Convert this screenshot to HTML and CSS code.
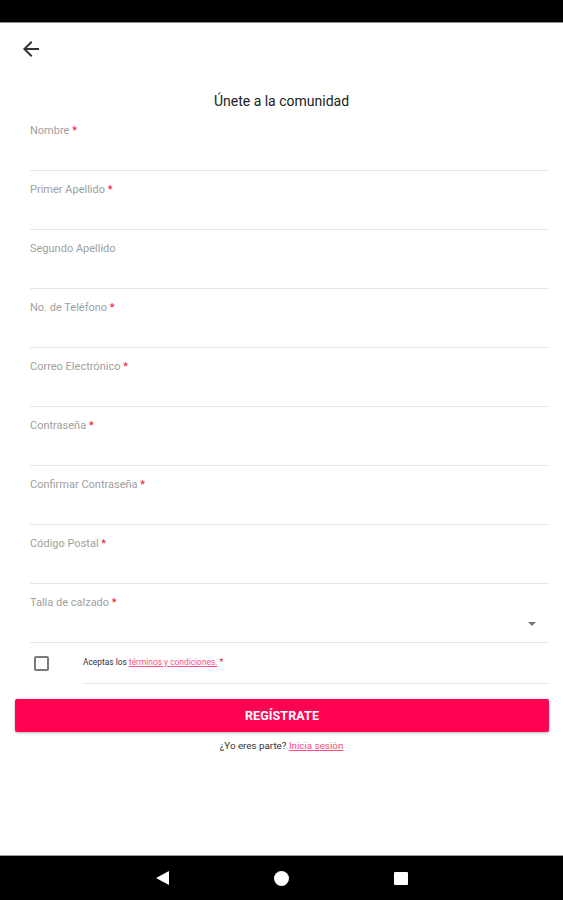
FILE: index.html
```html
<!DOCTYPE html>
<html lang="es">
<head>
<meta charset="utf-8">
<title>Únete a la comunidad</title>
<link rel="stylesheet" href="styles.css">
</head>
<body>
<div class="screen">
  <div class="status-bar"></div>
  <main class="content">
    <div class="header">
      <svg class="back" viewBox="0 0 24 24" width="24" height="24"><path d="M20 11H7.83l5.59-5.59L12 4l-8 8 8 8 1.41-1.41L7.830 13H20v-2z" fill="#333"/></svg>
    </div>
    <h1 class="title">Únete a la comunidad</h1>
    <form class="form">
      <div class="field"><span class="label">Nombre <span class="req">*</span></span></div>
      <div class="field"><span class="label">Primer Apellido <span class="req">*</span></span></div>
      <div class="field"><span class="label">Segundo Apellido</span></div>
      <div class="field"><span class="label">No. de Teléfono <span class="req">*</span></span></div>
      <div class="field"><span class="label">Correo Electrónico <span class="req">*</span></span></div>
      <div class="field"><span class="label">Contraseña <span class="req">*</span></span></div>
      <div class="field"><span class="label">Confirmar Contraseña <span class="req">*</span></span></div>
      <div class="field"><span class="label">Código Postal <span class="req">*</span></span></div>
      <div class="field select"><span class="label">Talla de calzado <span class="req">*</span></span><span class="caret"></span></div>
    </form>
    <div class="terms">
      <span class="checkbox"></span>
      <div class="terms-text"><span>Aceptas los <a class="link">términos y condiciones.</a> <span class="req">*</span></span></div>
    </div>
    <div class="btn-wrap"><button class="btn" type="button">REGÍSTRATE</button></div>
    <p class="login">¿Yo eres parte? <a class="link">Inicia sesión</a></p>
  </main>
  <div class="nav-bar">
    <span class="nav-back"></span>
    <span class="nav-home"></span>
    <span class="nav-recent"></span>
  </div>
</div>
</body>
</html>
```

FILE: styles.css
```css
* { box-sizing: border-box; }
html, body { margin: 0; padding: 0; background: #fff; }
body { font-family: Roboto, "Liberation Sans", Arial, sans-serif; color: #333; }

.screen { width: 563px; height: 900px; display: flex; flex-direction: column; overflow: hidden; }

.status-bar { height: 23px; background: #000; border-bottom: 1px solid #8a8a8a; flex: none; }

.content { flex: 1; display: flex; flex-direction: column; }

.header { height: 38px; padding: 14px 0 0 19px; }
.back { display: block; }

.title { margin: 32px 0 3px; font-size: 14px; font-weight: 400; line-height: 16px; text-align: center; color: #222; }

.form { padding: 0 14px 0 30px; display: flex; flex-direction: column; }
.field { height: 59px; border-bottom: 1px solid #e6e6e6; padding-top: 12px; position: relative; }
.label { display: block; font-size: 11px; line-height: 14px; color: #a0a0a0; }
.req { color: #ee1133; }

.caret { position: absolute; right: 13px; top: 38px; width: 0; height: 0; border-left: 4px solid transparent; border-right: 4px solid transparent; border-top: 4px solid #777; }

.terms { display: flex; align-items: flex-start; padding: 0 14px 0 34px; height: 41px; }
.checkbox { width: 15px; height: 15px; border: 2px solid #7a7a7a; border-radius: 2px; margin-top: 13px; flex: none; }
.terms-text { flex: 1; margin-left: 34px; height: 41px; border-bottom: 1px solid #e6e6e6; padding-top: 14px; font-size: 8.4px; line-height: 10px; color: #333; }

.link { color: #ff4d80; text-decoration: underline; }

.btn-wrap { padding: 15px 14px 0 15px; }
.btn { display: block; width: 100%; height: 33px; border: 0; border-radius: 2px; background: #ff0352; color: #fff; font-family: Roboto, "Liberation Sans", Arial, sans-serif; font-weight: 700; font-size: 12.5px; letter-spacing: 0.1px; box-shadow: 0 1px 3px rgba(0,0,0,0.3); }

.login { margin: 8px 0 0; text-align: center; font-size: 9.8px; line-height: 12px; color: #333; }

.nav-bar { height: 45px; flex: none; background: #000; border-top: 1px solid #9a9a9a; display: flex; align-items: center; justify-content: center; }
.nav-back { width: 0; height: 0; border-top: 7.5px solid transparent; border-bottom: 7.5px solid transparent; border-right: 13px solid #fff; margin-right: 105px; }
.nav-home { width: 15px; height: 15px; border-radius: 50%; background: #fff; margin-right: 105px; }
.nav-recent { width: 14px; height: 13px; background: #fff; border-radius: 1px; }
```
